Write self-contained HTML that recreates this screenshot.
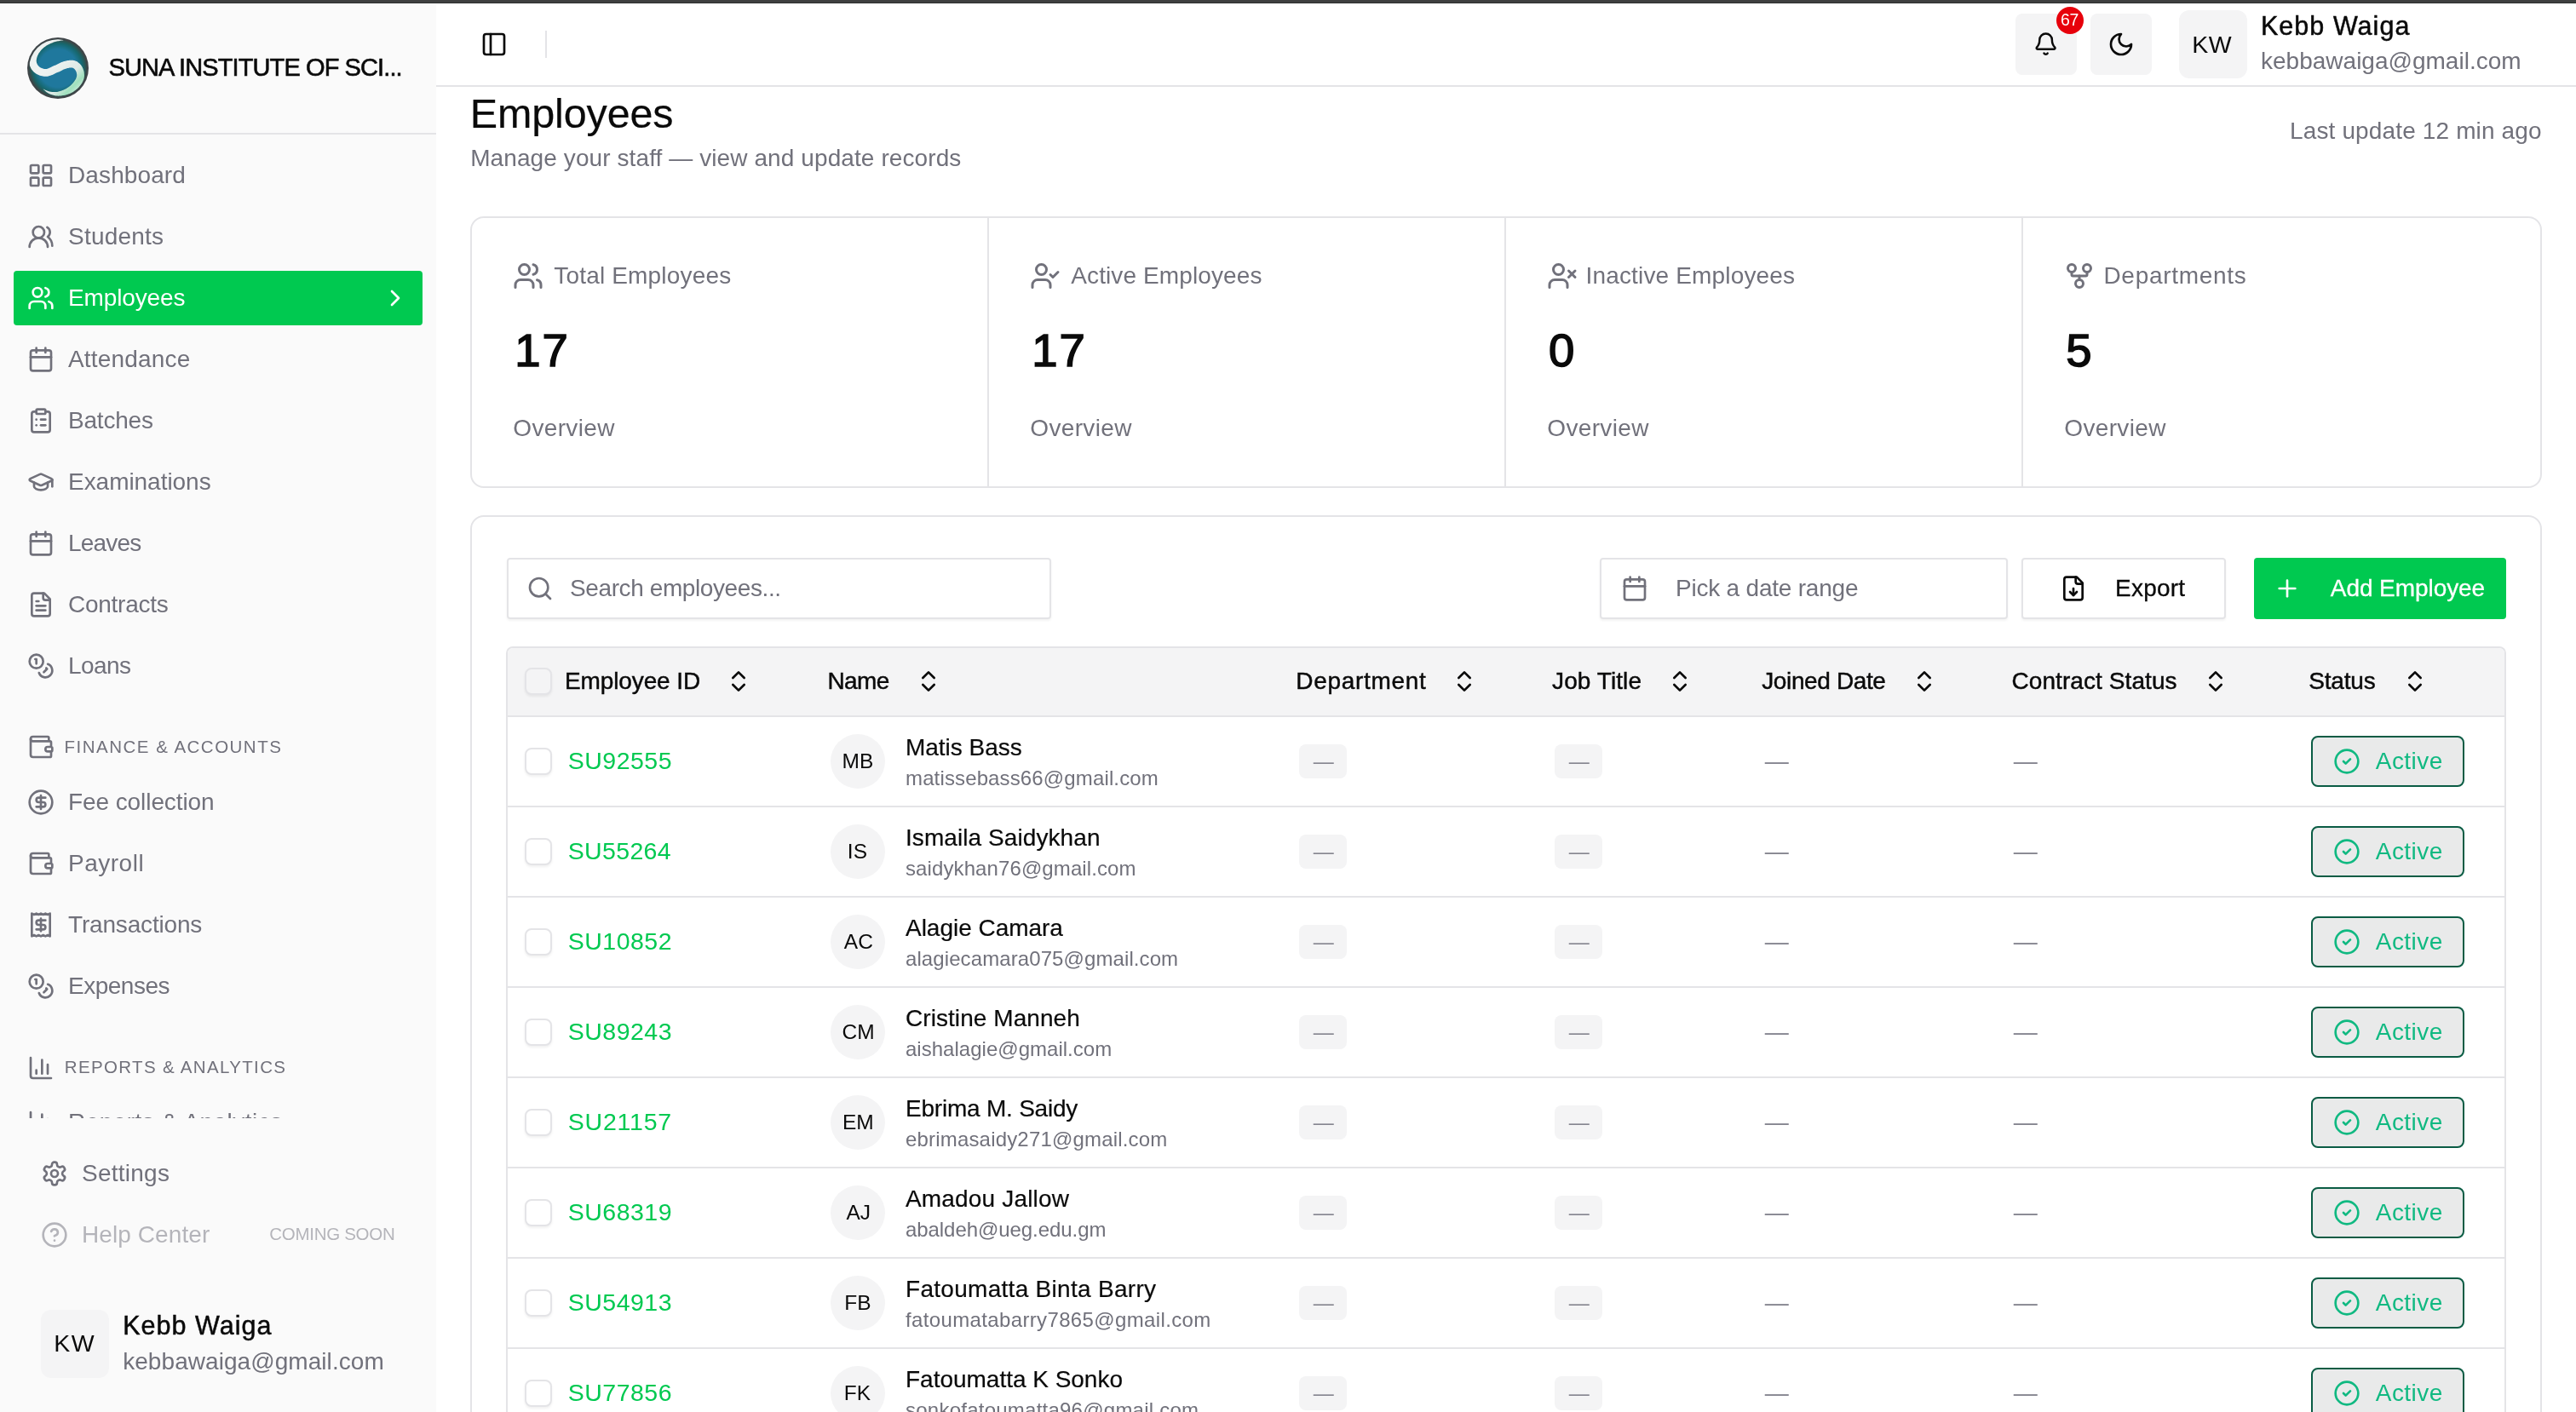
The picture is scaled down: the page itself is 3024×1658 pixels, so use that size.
<!DOCTYPE html>
<html lang="en"><head><meta charset="utf-8"><title>Employees</title>
<style>
*{box-sizing:border-box;margin:0;padding:0}
html,body{width:3024px;height:1658px;overflow:hidden;background:#fff}
body{font-family:"Liberation Sans",sans-serif;color:#0a0a0a;position:relative}
.t{position:absolute;white-space:nowrap}
.ic{position:absolute;fill:none;stroke:currentColor;stroke-linecap:round;stroke-linejoin:round;color:#71717b}
.abs{position:absolute}
#topbar{left:0;top:0;width:3024px;height:4px;background:linear-gradient(#3f4040 0,#3f4040 3px,#2e3030 3px,#2e3030 4px)}
#sidebar{left:0;top:5px;width:512px;height:1653px;background:#fafafa}
.hl{position:absolute;height:2px;background:#e4e4e7}
.vl{position:absolute;width:2px;background:#e4e4e7}
.card{position:absolute;border:2px solid #e4e4e7;border-radius:16px;background:#fff}
.btnbox{position:absolute;border:2px solid #e4e4e7;border-radius:4px;background:#fff;box-shadow:0 2px 3px rgba(0,0,0,.05)}
.sq{position:absolute;background:#f4f4f5;border-radius:12px}
.cb{position:absolute;width:32px;height:32px;border:2px solid #e4e4e7;border-radius:8px;background:#fff;box-shadow:0 2px 3px rgba(0,0,0,.06)}
.av{position:absolute;width:64px;height:64px;border-radius:50%;background:#f4f4f5}
.pill{position:absolute;width:56px;height:40px;border-radius:8px;background:#f4f4f5}
.badge{position:absolute;width:180px;height:60px;border:2px solid #0a5c44;border-radius:8px;background:#e9eaea}
#root{position:absolute;left:0;top:0;width:3024px;height:1658px;will-change:transform;transform-origin:0 0}
</style></head><body><div id="root">
<div id="topbar" class="abs"></div>
<div id="sidebar" class="abs"></div>

<svg class="abs" style="left:32px;top:43.5px;width:72px;height:72px" viewBox="0 0 72 72">
<defs><radialGradient id="lg" cx="50%" cy="50%" r="50%"><stop offset="0" stop-color="#1f789d"/><stop offset="0.62" stop-color="#1f789d"/><stop offset="0.8" stop-color="#16686f"/><stop offset="0.9" stop-color="#2b5552"/><stop offset="0.95" stop-color="#3f4548"/><stop offset="1" stop-color="#3f4548"/></radialGradient>
<linearGradient id="sw" gradientUnits="userSpaceOnUse" x1="30" y1="30" x2="62" y2="62"><stop offset="0" stop-color="#eef2f1"/><stop offset="0.55" stop-color="#dfeae6"/><stop offset="0.8" stop-color="#9fe0bd"/><stop offset="1" stop-color="#cfe9dc"/></linearGradient></defs>
<circle cx="36" cy="36" r="36" fill="url(#lg)"/>
<clipPath id="lc"><circle cx="36" cy="36" r="33.8"/></clipPath><path d="M43.2 2.8 L42.1 2.5 L41.1 2.2 L40.0 2.0 L39.0 1.7 L37.9 1.5 L36.9 1.3 L35.8 1.1 L34.7 0.9 L33.6 0.8 L32.4 0.7 L31.2 0.7 L30.0 0.8 L28.8 0.9 L27.6 1.0 L26.4 1.2 L25.2 1.5 L23.9 1.7 L22.7 2.0 L21.4 2.4 L20.2 2.8 L19.0 3.3 L17.8 3.8 L16.6 4.3 L15.5 4.9 L14.5 5.6 L13.4 6.3 L12.4 7.0 L11.5 7.8 L10.6 8.6 L9.7 9.5 L8.8 10.4 L8.0 11.3 L7.3 12.3 L6.6 13.3 L5.9 14.3 L5.3 15.3 L4.8 16.3 L4.3 17.4 L3.8 18.5 L3.4 19.6 L3.0 20.8 L2.7 21.9 L2.4 23.1 L2.2 24.3 L2.0 25.5 L2.0 26.7 L1.9 28.0 L2.0 29.2 L2.2 30.4 L2.5 31.5 L2.8 32.7 L3.2 33.8 L3.7 34.8 L4.2 35.9 L4.8 36.9 L5.4 37.9 L6.2 38.8 L6.9 39.7 L7.7 40.5 L8.6 41.3 L9.6 42.0 L10.6 42.7 L11.6 43.3 L12.7 43.8 L13.8 44.2 L14.9 44.7 L16.1 45.0 L17.3 45.3 L18.5 45.5 L19.7 45.7 L20.9 45.8 L22.2 45.8 L23.5 45.7 L24.8 45.5 L26.0 45.1 L27.2 44.7 L28.3 44.3 L29.4 43.9 L30.4 43.4 L31.4 42.9 L32.3 42.5 L33.3 42.0 L34.1 41.6 L35.0 41.3 L36.0 40.8 L37.1 40.4 L38.1 39.9 L39.1 39.4 L40.1 38.9 L41.0 38.4 L41.9 38.0 L42.8 37.6 L43.6 37.2 L44.4 36.9 L45.2 36.7 L45.9 36.4 L46.6 36.2 L47.4 36.1 L48.2 35.9 L49.0 35.8 L49.7 35.6 L50.4 35.6 L51.0 35.5 L51.6 35.5 L52.1 35.5 L52.6 35.6 L53.0 35.6 L53.3 35.7 L53.6 35.8 L53.9 36.0 L54.2 36.1 L54.6 36.4 L54.9 36.6 L55.3 36.9 L55.6 37.3 L55.9 37.6 L56.2 38.0 L56.5 38.4 L56.8 38.8 L57.0 39.2 L57.2 39.7 L57.4 40.1 L57.6 40.6 L57.8 41.2 L57.9 41.8 L58.0 42.3 L58.1 42.9 L58.2 43.5 L58.2 44.1 L58.2 44.6 L58.1 45.1 L58.1 45.6 L58.0 46.1 L57.8 46.6 L57.6 47.1 L57.4 47.7 L57.1 48.4 L56.8 49.0 L56.4 49.7 L56.0 50.3 L55.6 51.0 L55.2 51.6 L54.7 52.2 L54.2 52.8 L53.7 53.4 L53.2 54.0 L52.7 54.6 L52.1 55.2 L51.5 55.8 L50.8 56.4 L50.1 57.0 L49.5 57.5 L48.8 58.0 L48.1 58.6 L47.3 59.0 L46.6 59.5 L45.8 59.9 L45.0 60.4 L44.2 60.8 L43.3 61.2 L42.3 61.7 L41.4 62.0 L40.4 62.4 L39.5 62.7 L38.6 63.0 L37.7 63.3 L36.8 63.6 L36.0 63.7 L35.2 63.9 L34.4 64.0 L33.6 64.1 L32.8 64.1 L32.0 64.1 L31.2 64.1 L30.4 64.1 L29.7 64.0 L28.9 63.9 L28.1 63.8 L27.3 63.7 L26.6 63.6 L25.9 63.4 L25.2 63.3 L24.6 63.1 L23.9 62.8 L23.2 62.6 L22.6 62.3 L21.9 62.0 L21.2 61.7 L20.6 61.4 L19.9 61.1 L19.2 60.8 L18.5 60.6 L18.5 60.6 L19.1 61.1 L19.6 61.6 L20.2 62.0 L20.7 62.5 L21.3 63.0 L21.8 63.5 L22.4 63.9 L23.0 64.4 L23.7 64.8 L24.3 65.3 L25.1 65.7 L25.8 66.0 L26.6 66.4 L27.3 66.7 L28.1 67.0 L28.9 67.3 L29.8 67.6 L30.6 67.8 L31.5 68.1 L32.4 68.3 L33.4 68.4 L34.4 68.6 L35.4 68.6 L36.4 68.7 L37.5 68.6 L38.6 68.6 L39.7 68.5 L40.8 68.3 L42.0 68.1 L43.1 67.9 L44.3 67.7 L45.4 67.4 L46.5 67.1 L47.7 66.7 L48.7 66.3 L49.8 65.9 L50.8 65.4 L51.8 64.9 L52.8 64.4 L53.8 63.9 L54.7 63.3 L55.7 62.6 L56.6 62.0 L57.4 61.3 L58.3 60.6 L59.1 59.9 L59.8 59.1 L60.6 58.4 L61.3 57.6 L61.9 56.8 L62.6 55.9 L63.2 55.1 L63.8 54.2 L64.4 53.3 L64.9 52.3 L65.4 51.3 L65.8 50.3 L66.2 49.3 L66.5 48.3 L66.7 47.2 L66.9 46.1 L67.0 45.0 L67.0 44.0 L66.9 42.9 L66.8 41.8 L66.7 40.8 L66.5 39.8 L66.2 38.8 L65.9 37.9 L65.6 36.9 L65.2 36.0 L64.8 35.2 L64.3 34.3 L63.8 33.5 L63.3 32.7 L62.7 32.0 L62.0 31.2 L61.3 30.5 L60.5 29.9 L59.7 29.2 L58.8 28.6 L57.9 28.1 L56.9 27.7 L55.9 27.3 L54.8 27.0 L53.7 26.8 L52.7 26.7 L51.6 26.7 L50.6 26.7 L49.6 26.8 L48.5 26.9 L47.5 27.1 L46.5 27.3 L45.5 27.5 L44.5 27.7 L43.5 28.0 L42.4 28.3 L41.3 28.7 L40.3 29.1 L39.2 29.6 L38.2 30.0 L37.2 30.5 L36.2 31.0 L35.2 31.5 L34.3 31.9 L33.4 32.4 L32.5 32.8 L31.6 33.1 L30.6 33.6 L29.5 34.0 L28.6 34.5 L27.6 35.0 L26.7 35.4 L25.8 35.8 L25.0 36.2 L24.2 36.5 L23.5 36.7 L22.9 36.9 L22.3 37.0 L21.8 37.0 L21.2 37.0 L20.6 37.0 L19.9 36.9 L19.2 36.7 L18.4 36.5 L17.7 36.3 L17.0 36.1 L16.3 35.8 L15.7 35.5 L15.1 35.1 L14.6 34.8 L14.2 34.5 L13.8 34.1 L13.4 33.7 L13.0 33.3 L12.6 32.8 L12.3 32.2 L11.9 31.7 L11.6 31.1 L11.4 30.5 L11.1 29.9 L11.0 29.3 L10.9 28.8 L10.8 28.2 L10.7 27.7 L10.7 27.1 L10.8 26.4 L10.9 25.7 L11.0 24.9 L11.2 24.2 L11.4 23.4 L11.7 22.5 L12.0 21.8 L12.3 21.0 L12.7 20.2 L13.1 19.5 L13.4 18.8 L13.9 18.1 L14.4 17.4 L14.9 16.7 L15.4 16.0 L16.0 15.3 L16.6 14.6 L17.2 13.9 L17.8 13.3 L18.5 12.7 L19.2 12.0 L19.9 11.5 L20.6 10.9 L21.4 10.4 L22.2 9.8 L23.1 9.3 L24.0 8.8 L25.0 8.3 L26.0 7.8 L27.0 7.3 L28.0 6.8 L29.0 6.4 L30.0 6.0 L31.0 5.6 L31.9 5.3 L32.9 5.0 L33.8 4.8 L34.8 4.5 L35.8 4.3 L36.8 4.2 L37.9 4.0 L38.9 3.8 L40.0 3.6 L41.1 3.4 L42.1 3.2 L43.2 2.8Z" fill="url(#sw)" clip-path="url(#lc)"/>
</svg>
<span id="t1" class="t" style="left:127.57px;top:60.25px;font-size:29px;line-height:38px;color:#0a0a0a;letter-spacing:-0.900px;-webkit-text-stroke:0.6px #0a0a0a;">SUNA INSTITUTE OF SCI...</span>
<div class="hl" style="left:0;top:156px;width:512px"></div>
<svg class="ic" style="left:32px;top:190px;width:32px;height:32px;" viewBox="0 0 24 24" stroke-width="2"><rect width="7" height="7" x="3" y="3" rx="1"/><rect width="7" height="7" x="14" y="3" rx="1"/><rect width="7" height="7" x="14" y="14" rx="1"/><rect width="7" height="7" x="3" y="14" rx="1"/></svg>
<span id="t2" class="t" style="left:80.00px;top:187.75px;font-size:28px;line-height:36px;color:#71717b;letter-spacing:0.113px;">Dashboard</span>
<svg class="ic" style="left:32px;top:262px;width:32px;height:32px;" viewBox="0 0 24 24" stroke-width="2"><path d="M18 21a8 8 0 0 0-16 0"/><circle cx="10" cy="8" r="5"/><path d="M22 20c0-3.37-2-6.5-4-8a5 5 0 0 0-.45-8.3"/></svg>
<span id="t3" class="t" style="left:80.00px;top:259.75px;font-size:28px;line-height:36px;color:#71717b;letter-spacing:0.219px;">Students</span>
<div class="abs" style="left:16px;top:318px;width:480px;height:64px;border-radius:4px;background:#00c950"></div>
<svg class="ic" style="left:32px;top:334px;width:32px;height:32px;color:#fff;" viewBox="0 0 24 24" stroke-width="2"><path d="M16 21v-2a4 4 0 0 0-4-4H6a4 4 0 0 0-4 4v2"/><circle cx="9" cy="7" r="4"/><path d="M22 21v-2a4 4 0 0 0-3-3.87"/><path d="M16 3.13a4 4 0 0 1 0 7.75"/></svg>
<span id="t4" class="t" style="left:80.00px;top:331.75px;font-size:28px;line-height:36px;color:#fff;letter-spacing:-0.124px;">Employees</span>
<svg class="ic" style="left:448px;top:334px;width:32px;height:32px;color:#fff;" viewBox="0 0 24 24" stroke-width="2"><path d="m9 18 6-6-6-6"/></svg>
<svg class="ic" style="left:32px;top:406px;width:32px;height:32px;" viewBox="0 0 24 24" stroke-width="2"><path d="M8 2v4"/><path d="M16 2v4"/><rect width="18" height="18" x="3" y="4" rx="2"/><path d="M3 10h18"/></svg>
<span id="t5" class="t" style="left:80.00px;top:403.75px;font-size:28px;line-height:36px;color:#71717b;letter-spacing:0.170px;">Attendance</span>
<svg class="ic" style="left:32px;top:478px;width:32px;height:32px;" viewBox="0 0 24 24" stroke-width="2"><rect width="8" height="4" x="8" y="2" rx="1" ry="1"/><path d="M16 4h2a2 2 0 0 1 2 2v14a2 2 0 0 1-2 2H6a2 2 0 0 1-2-2V6a2 2 0 0 1 2-2h2"/><path d="M12 11h4"/><path d="M12 16h4"/><path d="M8 11h.01"/><path d="M8 16h.01"/></svg>
<span id="t6" class="t" style="left:80.00px;top:475.75px;font-size:28px;line-height:36px;color:#71717b;letter-spacing:-0.195px;">Batches</span>
<svg class="ic" style="left:32px;top:550px;width:32px;height:32px;" viewBox="0 0 24 24" stroke-width="2"><path d="M21.42 10.922a1 1 0 0 0-.019-1.838L12.83 5.18a2 2 0 0 0-1.66 0L2.6 9.08a1 1 0 0 0 0 1.832l8.57 3.908a2 2 0 0 0 1.66 0z"/><path d="M22 10v6"/><path d="M6 12.5V16a6 3 0 0 0 12 0v-3.5"/></svg>
<span id="t7" class="t" style="left:80.00px;top:547.75px;font-size:28px;line-height:36px;color:#71717b;letter-spacing:-0.041px;">Examinations</span>
<svg class="ic" style="left:32px;top:622px;width:32px;height:32px;" viewBox="0 0 24 24" stroke-width="2"><path d="M8 2v4"/><path d="M16 2v4"/><rect width="18" height="18" x="3" y="4" rx="2"/><path d="M3 10h18"/></svg>
<span id="t8" class="t" style="left:80.00px;top:619.75px;font-size:28px;line-height:36px;color:#71717b;letter-spacing:-0.792px;">Leaves</span>
<svg class="ic" style="left:32px;top:694px;width:32px;height:32px;" viewBox="0 0 24 24" stroke-width="2"><path d="M15 2H6a2 2 0 0 0-2 2v16a2 2 0 0 0 2 2h12a2 2 0 0 0 2-2V7Z"/><path d="M14 2v4a2 2 0 0 0 2 2h4"/><path d="M10 9H8"/><path d="M16 13H8"/><path d="M16 17H8"/></svg>
<span id="t9" class="t" style="left:80.00px;top:691.75px;font-size:28px;line-height:36px;color:#71717b;letter-spacing:-0.259px;">Contracts</span>
<svg class="ic" style="left:32px;top:766px;width:32px;height:32px;" viewBox="0 0 24 24" stroke-width="2"><circle cx="8" cy="8" r="6"/><path d="M18.09 10.37A6 6 0 1 1 10.34 18"/><path d="M7 6h1v4"/><path d="m16.71 13.88.7.71-2.82 2.82"/></svg>
<span id="t10" class="t" style="left:80.00px;top:763.75px;font-size:28px;line-height:36px;color:#71717b;letter-spacing:-0.585px;">Loans</span>
<svg class="ic" style="left:32px;top:861px;width:32px;height:32px;" viewBox="0 0 24 24" stroke-width="2"><path d="M19 7V4a1 1 0 0 0-1-1H5a2 2 0 0 0 0 4h15a1 1 0 0 1 1 1v4h-3a2 2 0 0 0 0 4h3a1 1 0 0 0 1-1v-2a1 1 0 0 0-1-1"/><path d="M3 5v14a2 2 0 0 0 2 2h15a1 1 0 0 0 1-1v-4"/></svg>
<span id="t11" class="t" style="left:75.62px;top:863.25px;font-size:20.5px;line-height:27px;color:#71717b;letter-spacing:1.488px;">FINANCE &amp; ACCOUNTS</span>
<svg class="ic" style="left:32px;top:926.0px;width:32px;height:32px;" viewBox="0 0 24 24" stroke-width="2"><circle cx="12" cy="12" r="10"/><path d="M16 8h-6a2 2 0 1 0 0 4h4a2 2 0 1 1 0 4H8"/><path d="M12 18V6"/></svg>
<span id="t12" class="t" style="left:80.00px;top:923.75px;font-size:28px;line-height:36px;color:#71717b;letter-spacing:-0.083px;">Fee collection</span>
<svg class="ic" style="left:32px;top:998.0px;width:32px;height:32px;" viewBox="0 0 24 24" stroke-width="2"><path d="M19 7V4a1 1 0 0 0-1-1H5a2 2 0 0 0 0 4h15a1 1 0 0 1 1 1v4h-3a2 2 0 0 0 0 4h3a1 1 0 0 0 1-1v-2a1 1 0 0 0-1-1"/><path d="M3 5v14a2 2 0 0 0 2 2h15a1 1 0 0 0 1-1v-4"/></svg>
<span id="t13" class="t" style="left:80.00px;top:995.75px;font-size:28px;line-height:36px;color:#71717b;letter-spacing:0.510px;">Payroll</span>
<svg class="ic" style="left:32px;top:1070.0px;width:32px;height:32px;" viewBox="0 0 24 24" stroke-width="2"><path d="M4 2v20l2-1 2 1 2-1 2 1 2-1 2 1 2-1 2 1V2l-2 1-2-1-2 1-2-1-2 1-2-1-2 1Z"/><path d="M16 8h-6a2 2 0 1 0 0 4h4a2 2 0 1 1 0 4H8"/><path d="M12 17.5v-11"/></svg>
<span id="t14" class="t" style="left:80.00px;top:1067.75px;font-size:28px;line-height:36px;color:#71717b;letter-spacing:-0.172px;">Transactions</span>
<svg class="ic" style="left:32px;top:1142.0px;width:32px;height:32px;" viewBox="0 0 24 24" stroke-width="2"><circle cx="8" cy="8" r="6"/><path d="M18.09 10.37A6 6 0 1 1 10.34 18"/><path d="M7 6h1v4"/><path d="m16.71 13.88.7.71-2.82 2.82"/></svg>
<span id="t15" class="t" style="left:80.00px;top:1139.75px;font-size:28px;line-height:36px;color:#71717b;letter-spacing:-0.489px;">Expenses</span>
<svg class="ic" style="left:32px;top:1237.5px;width:32px;height:32px;" viewBox="0 0 24 24" stroke-width="2"><path d="M3 3v16a2 2 0 0 0 2 2h16"/><path d="M18 17V9"/><path d="M13 17V5"/><path d="M8 17v-3"/></svg>
<span id="t16" class="t" style="left:75.80px;top:1239.25px;font-size:20.5px;line-height:27px;color:#71717b;letter-spacing:1.340px;">REPORTS &amp; ANALYTICS</span>
<div class="abs" style="left:0;top:1290px;width:512px;height:23px;overflow:hidden">
<svg class="ic" style="left:32px;top:11.5px;width:32px;height:32px;" viewBox="0 0 24 24" stroke-width="2"><path d="M3 3v16a2 2 0 0 0 2 2h16"/><path d="M18 17V9"/><path d="M13 17V5"/><path d="M8 17v-3"/></svg>
<span id="t17" class="t" style="left:80.00px;top:9.75px;font-size:28px;line-height:36px;color:#71717b;letter-spacing:0.465px;">Reports &amp; Analytics</span>
</div>
<svg class="ic" style="left:48px;top:1362px;width:32px;height:32px;" viewBox="0 0 24 24" stroke-width="2"><path d="M12.22 2h-.44a2 2 0 0 0-2 2v.18a2 2 0 0 1-1 1.73l-.43.25a2 2 0 0 1-2 0l-.15-.08a2 2 0 0 0-2.73.73l-.22.38a2 2 0 0 0 .73 2.73l.15.1a2 2 0 0 1 1 1.72v.51a2 2 0 0 1-1 1.74l-.15.09a2 2 0 0 0-.73 2.73l.22.38a2 2 0 0 0 2.73.73l.15-.08a2 2 0 0 1 2 0l.43.25a2 2 0 0 1 1 1.73V20a2 2 0 0 0 2 2h.44a2 2 0 0 0 2-2v-.18a2 2 0 0 1 1-1.73l.43-.25a2 2 0 0 1 2 0l.15.08a2 2 0 0 0 2.73-.73l.22-.39a2 2 0 0 0-.73-2.73l-.15-.08a2 2 0 0 1-1-1.74v-.5a2 2 0 0 1 1-1.74l.15-.09a2 2 0 0 0 .73-2.73l-.22-.38a2 2 0 0 0-2.73-.73l-.15.08a2 2 0 0 1-2 0l-.43-.25a2 2 0 0 1-1-1.73V4a2 2 0 0 0-2-2z"/><circle cx="12" cy="12" r="3"/></svg>
<span id="t18" class="t" style="left:96.00px;top:1359.75px;font-size:28px;line-height:36px;color:#71717b;letter-spacing:0.244px;">Settings</span>
<div class="abs" style="left:0;top:1410px;width:512px;height:80px;opacity:.5">
<svg class="ic" style="left:48px;top:24px;width:32px;height:32px;" viewBox="0 0 24 24" stroke-width="2"><circle cx="12" cy="12" r="10"/><path d="M9.09 9a3 3 0 0 1 5.83 1c0 2-3 3-3 3"/><path d="M12 17h.01"/></svg>
<span id="t19" class="t" style="left:96.00px;top:21.75px;font-size:28px;line-height:36px;color:#71717b;letter-spacing:0.081px;">Help Center</span>
<span id="t20" class="t" style="left:316.36px;top:25.25px;font-size:20.5px;line-height:27px;color:#71717b;letter-spacing:-0.297px;">COMING SOON</span>
</div>
<div class="sq" style="left:48px;top:1538px;width:80px;height:80px"></div>
<span id="t21" class="t" style="left:63.30px;top:1558.75px;font-size:28.5px;line-height:37px;color:#0a0a0a;letter-spacing:1.530px;">KW</span>
<span id="t22" class="t" style="left:144.20px;top:1536.25px;font-size:30.5px;line-height:40px;color:#0a0a0a;letter-spacing:1.040px;-webkit-text-stroke:0.5px #0a0a0a;">Kebb Waiga</span>
<span id="t23" class="t" style="left:144.20px;top:1580.75px;font-size:28px;line-height:36px;color:#71717b;letter-spacing:0.057px;">kebbawaiga@gmail.com</span>
<div class="hl" style="left:512px;top:100px;width:2512px"></div>
<svg class="ic" style="left:564px;top:36px;width:32px;height:32px;color:#0a0a0a;" viewBox="0 0 24 24" stroke-width="2"><rect width="18" height="18" x="3" y="3" rx="2"/><path d="M9 3v18"/></svg>
<div class="vl" style="left:640px;top:36px;height:32px"></div>
<div class="sq" style="left:2366px;top:16px;width:72px;height:72px;border-radius:8px"></div>
<svg class="ic" style="left:2387.4px;top:37.3px;width:29.2px;height:29.2px;color:#0a0a0a;" viewBox="0 0 24 24" stroke-width="2"><path d="M10.268 21a2 2 0 0 0 3.464 0"/><path d="M3.262 15.326A1 1 0 0 0 4 17h16a1 1 0 0 0 .74-1.673C19.41 13.956 18 12.499 18 8A6 6 0 0 0 6 8c0 4.499-1.411 5.956-2.738 7.326"/></svg>
<div class="abs" style="left:2414px;top:8px;width:32px;height:32px;border-radius:50%;background:#e7000b"></div>
<span id="t24" class="t" style="left:2419.10px;top:10.75px;font-size:19.5px;line-height:25px;color:#fff;letter-spacing:-0.360px;">67</span>
<div class="sq" style="left:2454px;top:16px;width:72px;height:72px;border-radius:8px"></div>
<svg class="ic" style="left:2474px;top:36px;width:32px;height:32px;color:#0a0a0a;" viewBox="0 0 24 24" stroke-width="2"><path d="M12 3a6 6 0 0 0 9 9 9 9 0 1 1-9-9Z"/></svg>
<div class="sq" style="left:2558px;top:12px;width:80px;height:80px"></div>
<span id="t25" class="t" style="left:2573.30px;top:33.75px;font-size:28.5px;line-height:37px;color:#0a0a0a;letter-spacing:0.360px;">KW</span>
<span id="t26" class="t" style="left:2653.99px;top:10.25px;font-size:30.5px;line-height:40px;color:#0a0a0a;letter-spacing:1.040px;-webkit-text-stroke:0.5px #0a0a0a;">Kebb Waiga</span>
<span id="t27" class="t" style="left:2653.99px;top:53.75px;font-size:28px;line-height:36px;color:#71717b;letter-spacing:0.009px;">kebbawaiga@gmail.com</span>
<span id="t28" class="t" style="left:551.84px;top:101.75px;font-size:48.5px;line-height:63px;color:#0a0a0a;letter-spacing:-0.146px;-webkit-text-stroke:0.2px #0a0a0a;">Employees</span>
<span id="t29" class="t" style="left:552.20px;top:167.75px;font-size:28px;line-height:36px;color:#71717b;letter-spacing:0.092px;">Manage your staff — view and update records</span>
<span id="t30" class="t" style="left:2687.99px;top:135.75px;font-size:28px;line-height:36px;color:#71717b;letter-spacing:0.141px;">Last update 12 min ago</span>
<div class="card" style="left:552px;top:254px;width:2432px;height:319px"></div>
<div class="vl" style="left:1159px;top:256px;height:315px"></div>
<div class="vl" style="left:1766px;top:256px;height:315px"></div>
<div class="vl" style="left:2373px;top:256px;height:315px"></div>
<svg class="ic" style="left:602px;top:306px;width:36px;height:36px;" viewBox="0 0 24 24" stroke-width="2"><path d="M16 21v-2a4 4 0 0 0-4-4H6a4 4 0 0 0-4 4v2"/><circle cx="9" cy="7" r="4"/><path d="M22 21v-2a4 4 0 0 0-3-3.87"/><path d="M16 3.13a4 4 0 0 1 0 7.75"/></svg>
<span id="t31" class="t" style="left:650.24px;top:305.75px;font-size:28px;line-height:36px;color:#71717b;letter-spacing:0.180px;">Total Employees</span>
<span id="t32" class="t" style="left:604.36px;top:376.25px;font-size:54.5px;line-height:71px;color:#0a0a0a;letter-spacing:1.800px;-webkit-text-stroke:1.6px #0a0a0a;">17</span>
<span id="t33" class="t" style="left:602.35px;top:484.75px;font-size:28px;line-height:36px;color:#71717b;letter-spacing:0.334px;">Overview</span>
<svg class="ic" style="left:1209px;top:306px;width:36px;height:36px;" viewBox="0 0 24 24" stroke-width="2"><path d="M16 21v-2a4 4 0 0 0-4-4H6a4 4 0 0 0-4 4v2"/><circle cx="9" cy="7" r="4"/><polyline points="16 11 18 13 22 9"/></svg>
<span id="t34" class="t" style="left:1257.24px;top:305.75px;font-size:28px;line-height:36px;color:#71717b;letter-spacing:0.108px;">Active Employees</span>
<span id="t35" class="t" style="left:1211.36px;top:376.25px;font-size:54.5px;line-height:71px;color:#0a0a0a;letter-spacing:1.800px;-webkit-text-stroke:1.6px #0a0a0a;">17</span>
<span id="t36" class="t" style="left:1209.35px;top:484.75px;font-size:28px;line-height:36px;color:#71717b;letter-spacing:0.334px;">Overview</span>
<svg class="ic" style="left:1816px;top:306px;width:36px;height:36px;" viewBox="0 0 24 24" stroke-width="2"><path d="M16 21v-2a4 4 0 0 0-4-4H6a4 4 0 0 0-4 4v2"/><circle cx="9" cy="7" r="4"/><line x1="17" x2="22" y1="8" y2="13"/><line x1="22" x2="17" y1="8" y2="13"/></svg>
<span id="t37" class="t" style="left:1861.54px;top:305.75px;font-size:28px;line-height:36px;color:#71717b;letter-spacing:0.159px;">Inactive Employees</span>
<span id="t38" class="t" style="left:1818.12px;top:376.25px;font-size:54.5px;line-height:71px;color:#0a0a0a;-webkit-text-stroke:1.6px #0a0a0a;">0</span>
<span id="t39" class="t" style="left:1816.35px;top:484.75px;font-size:28px;line-height:36px;color:#71717b;letter-spacing:0.334px;">Overview</span>
<svg class="ic" style="left:2423px;top:306px;width:36px;height:36px;" viewBox="0 0 24 24" stroke-width="2"><circle cx="12" cy="18" r="3"/><circle cx="6" cy="6" r="3"/><circle cx="18" cy="6" r="3"/><path d="M18 9v2c0 .6-.4 1-1 1H7c-.6 0-1-.4-1-1V9"/><path d="M12 12v3"/></svg>
<span id="t40" class="t" style="left:2469.44px;top:305.75px;font-size:28px;line-height:36px;color:#71717b;letter-spacing:0.711px;">Departments</span>
<span id="t41" class="t" style="left:2425.17px;top:376.25px;font-size:54.5px;line-height:71px;color:#0a0a0a;-webkit-text-stroke:1.6px #0a0a0a;">5</span>
<span id="t42" class="t" style="left:2423.35px;top:484.75px;font-size:28px;line-height:36px;color:#71717b;letter-spacing:0.334px;">Overview</span>
<div class="card" style="left:552px;top:605px;width:2432px;height:1200px"></div>
<div class="btnbox" style="left:594.5px;top:655px;width:639px;height:72px"></div>
<svg class="ic" style="left:618px;top:675px;width:32px;height:32px;" viewBox="0 0 24 24" stroke-width="2"><circle cx="11" cy="11" r="8"/><path d="m21 21-4.3-4.3"/></svg>
<span id="t43" class="t" style="left:669.10px;top:672.75px;font-size:28px;line-height:36px;color:#71717b;letter-spacing:-0.405px;">Search employees...</span>
<div class="btnbox" style="left:1877.5px;top:655px;width:479.5px;height:72px"></div>
<svg class="ic" style="left:1903px;top:675px;width:32px;height:32px;" viewBox="0 0 24 24" stroke-width="2"><path d="M8 2v4"/><path d="M16 2v4"/><rect width="18" height="18" x="3" y="4" rx="2"/><path d="M3 10h18"/></svg>
<span id="t44" class="t" style="left:1967.03px;top:672.75px;font-size:28px;line-height:36px;color:#71717b;letter-spacing:-0.214px;">Pick a date range</span>
<div class="btnbox" style="left:2373px;top:655px;width:239.5px;height:72px"></div>
<svg class="ic" style="left:2418px;top:675px;width:32px;height:32px;color:#0a0a0a;" viewBox="0 0 24 24" stroke-width="2"><path d="M15 2H6a2 2 0 0 0-2 2v16a2 2 0 0 0 2 2h12a2 2 0 0 0 2-2V7Z"/><path d="M14 2v4a2 2 0 0 0 2 2h4"/><path d="M12 18v-6"/><path d="m9 15 3 3 3-3"/></svg>
<span id="t45" class="t" style="left:2483.08px;top:672.75px;font-size:28px;line-height:36px;color:#0a0a0a;letter-spacing:0.216px;-webkit-text-stroke:0.3px #0a0a0a;">Export</span>
<div class="abs" style="left:2645.5px;top:655px;width:296.5px;height:72px;border-radius:4px;background:#00c950"></div>
<svg class="ic" style="left:2669px;top:675px;width:32px;height:32px;color:#fff;" viewBox="0 0 24 24" stroke-width="2"><path d="M5 12h14"/><path d="M12 5v14"/></svg>
<span id="t46" class="t" style="left:2735.78px;top:672.75px;font-size:28px;line-height:36px;color:#fff;letter-spacing:-0.065px;-webkit-text-stroke:0.3px #fff;">Add Employee</span>
<div class="abs" style="left:594px;top:759px;width:2348px;height:1000px;border:2px solid #e4e4e7;border-radius:8px 8px 0 0;background:#fff"></div>
<div class="abs" style="left:596px;top:761px;width:2344px;height:79px;border-radius:6px 6px 0 0;background:#f4f4f5"></div>
<div class="cb" style="left:616px;top:784px;background:#f4f4f5"></div>
<span id="t47" class="t" style="left:662.99px;top:781.75px;font-size:28px;line-height:36px;color:#0a0a0a;letter-spacing:-0.117px;-webkit-text-stroke:0.45px #0a0a0a;">Employee ID</span>
<svg class="ic" style="left:851.1px;top:784.3px;width:32px;height:32px;color:#0a0a0a;" viewBox="0 0 24 24" stroke-width="2"><path d="m7 15 5 5 5-5"/><path d="m7 9 5-5 5 5"/></svg>
<span id="t48" class="t" style="left:971.41px;top:781.75px;font-size:28px;line-height:36px;color:#0a0a0a;letter-spacing:-0.600px;-webkit-text-stroke:0.45px #0a0a0a;">Name</span>
<svg class="ic" style="left:1073.9px;top:784.3px;width:32px;height:32px;color:#0a0a0a;" viewBox="0 0 24 24" stroke-width="2"><path d="m7 15 5 5 5-5"/><path d="m7 9 5-5 5 5"/></svg>
<span id="t49" class="t" style="left:1521.25px;top:781.75px;font-size:28px;line-height:36px;color:#0a0a0a;letter-spacing:0.690px;-webkit-text-stroke:0.45px #0a0a0a;">Department</span>
<svg class="ic" style="left:1702.7px;top:784.3px;width:32px;height:32px;color:#0a0a0a;" viewBox="0 0 24 24" stroke-width="2"><path d="m7 15 5 5 5-5"/><path d="m7 9 5-5 5 5"/></svg>
<span id="t50" class="t" style="left:1822.05px;top:781.75px;font-size:28px;line-height:36px;color:#0a0a0a;letter-spacing:0.079px;-webkit-text-stroke:0.45px #0a0a0a;">Job Title</span>
<svg class="ic" style="left:1955.7px;top:784.3px;width:32px;height:32px;color:#0a0a0a;" viewBox="0 0 24 24" stroke-width="2"><path d="m7 15 5 5 5-5"/><path d="m7 9 5-5 5 5"/></svg>
<span id="t51" class="t" style="left:2068.25px;top:781.75px;font-size:28px;line-height:36px;color:#0a0a0a;letter-spacing:-0.378px;-webkit-text-stroke:0.45px #0a0a0a;">Joined Date</span>
<svg class="ic" style="left:2242.9px;top:784.3px;width:32px;height:32px;color:#0a0a0a;" viewBox="0 0 24 24" stroke-width="2"><path d="m7 15 5 5 5-5"/><path d="m7 9 5-5 5 5"/></svg>
<span id="t52" class="t" style="left:2361.51px;top:781.75px;font-size:28px;line-height:36px;color:#0a0a0a;letter-spacing:0.077px;-webkit-text-stroke:0.45px #0a0a0a;">Contract Status</span>
<svg class="ic" style="left:2584.7px;top:784.3px;width:32px;height:32px;color:#0a0a0a;" viewBox="0 0 24 24" stroke-width="2"><path d="m7 15 5 5 5-5"/><path d="m7 9 5-5 5 5"/></svg>
<span id="t53" class="t" style="left:2710.30px;top:781.75px;font-size:28px;line-height:36px;color:#0a0a0a;letter-spacing:-0.198px;-webkit-text-stroke:0.45px #0a0a0a;">Status</span>
<svg class="ic" style="left:2818.7px;top:784.3px;width:32px;height:32px;color:#0a0a0a;" viewBox="0 0 24 24" stroke-width="2"><path d="m7 15 5 5 5-5"/><path d="m7 9 5-5 5 5"/></svg>
<div class="hl" style="left:596px;top:840px;width:2344px"></div>
<div class="cb" style="left:616px;top:878px"></div>
<span id="t54" class="t" style="left:666.78px;top:874.75px;font-size:28.5px;line-height:37px;color:#00c950;letter-spacing:0.480px;">SU92555</span>
<div class="av" style="left:975px;top:862px"></div>
<span id="t55" class="t" style="left:988.55px;top:877.75px;font-size:24.5px;line-height:32px;color:#0a0a0a;">MB</span>
<span id="t56" class="t" style="left:1063.00px;top:859.75px;font-size:28px;line-height:36px;color:#0a0a0a;letter-spacing:-0.030px;-webkit-text-stroke:0.2px #0a0a0a;">Matis Bass</span>
<span id="t57" class="t" style="left:1063.00px;top:898.25px;font-size:24px;line-height:31px;color:#71717b;letter-spacing:0.135px;">matissebass66@gmail.com</span>
<div class="pill" style="left:1525px;top:874px"></div>
<span id="t58" class="t" style="left:1541.74px;top:878.25px;font-size:24px;line-height:31px;color:#85858f;">—</span>
<div class="pill" style="left:1825px;top:874px"></div>
<span id="t59" class="t" style="left:1841.74px;top:878.25px;font-size:24px;line-height:31px;color:#85858f;">—</span>
<span id="t60" class="t" style="left:2071.74px;top:875.75px;font-size:28px;line-height:36px;color:#85858f;">—</span>
<span id="t61" class="t" style="left:2363.63px;top:875.75px;font-size:28px;line-height:36px;color:#85858f;">—</span>
<div class="badge" style="left:2713px;top:864px"></div>
<svg class="ic" style="left:2739px;top:878px;width:32px;height:32px;color:#10b981;" viewBox="0 0 24 24" stroke-width="2"><circle cx="12" cy="12" r="10"/><path d="m9 12 2 2 4-4"/></svg>
<span id="t62" class="t" style="left:2788.80px;top:875.75px;font-size:28px;line-height:36px;color:#10b981;letter-spacing:0.450px;">Active</span>
<div class="hl" style="left:596px;top:946px;width:2344px"></div>
<div class="cb" style="left:616px;top:984px"></div>
<span id="t63" class="t" style="left:666.78px;top:980.75px;font-size:28.5px;line-height:37px;color:#00c950;letter-spacing:0.330px;">SU55264</span>
<div class="av" style="left:975px;top:968px"></div>
<span id="t64" class="t" style="left:994.85px;top:983.75px;font-size:24.5px;line-height:32px;color:#0a0a0a;">IS</span>
<span id="t65" class="t" style="left:1063.00px;top:965.75px;font-size:28px;line-height:36px;color:#0a0a0a;letter-spacing:0.079px;-webkit-text-stroke:0.2px #0a0a0a;">Ismaila Saidykhan</span>
<span id="t66" class="t" style="left:1063.00px;top:1004.25px;font-size:24px;line-height:31px;color:#71717b;letter-spacing:0.103px;">saidykhan76@gmail.com</span>
<div class="pill" style="left:1525px;top:980px"></div>
<span id="t67" class="t" style="left:1541.74px;top:984.25px;font-size:24px;line-height:31px;color:#85858f;">—</span>
<div class="pill" style="left:1825px;top:980px"></div>
<span id="t68" class="t" style="left:1841.74px;top:984.25px;font-size:24px;line-height:31px;color:#85858f;">—</span>
<span id="t69" class="t" style="left:2071.74px;top:981.75px;font-size:28px;line-height:36px;color:#85858f;">—</span>
<span id="t70" class="t" style="left:2363.63px;top:981.75px;font-size:28px;line-height:36px;color:#85858f;">—</span>
<div class="badge" style="left:2713px;top:970px"></div>
<svg class="ic" style="left:2739px;top:984px;width:32px;height:32px;color:#10b981;" viewBox="0 0 24 24" stroke-width="2"><circle cx="12" cy="12" r="10"/><path d="m9 12 2 2 4-4"/></svg>
<span id="t71" class="t" style="left:2788.80px;top:981.75px;font-size:28px;line-height:36px;color:#10b981;letter-spacing:0.450px;">Active</span>
<div class="hl" style="left:596px;top:1052px;width:2344px"></div>
<div class="cb" style="left:616px;top:1090px"></div>
<span id="t72" class="t" style="left:666.78px;top:1086.75px;font-size:28.5px;line-height:37px;color:#00c950;letter-spacing:0.480px;">SU10852</span>
<div class="av" style="left:975px;top:1074px"></div>
<span id="t73" class="t" style="left:990.80px;top:1089.75px;font-size:24.5px;line-height:32px;color:#0a0a0a;">AC</span>
<span id="t74" class="t" style="left:1063.00px;top:1071.75px;font-size:28px;line-height:36px;color:#0a0a0a;letter-spacing:-0.023px;-webkit-text-stroke:0.2px #0a0a0a;">Alagie Camara</span>
<span id="t75" class="t" style="left:1063.00px;top:1110.25px;font-size:24px;line-height:31px;color:#71717b;letter-spacing:0.094px;">alagiecamara075@gmail.com</span>
<div class="pill" style="left:1525px;top:1086px"></div>
<span id="t76" class="t" style="left:1541.74px;top:1090.25px;font-size:24px;line-height:31px;color:#85858f;">—</span>
<div class="pill" style="left:1825px;top:1086px"></div>
<span id="t77" class="t" style="left:1841.74px;top:1090.25px;font-size:24px;line-height:31px;color:#85858f;">—</span>
<span id="t78" class="t" style="left:2071.74px;top:1087.75px;font-size:28px;line-height:36px;color:#85858f;">—</span>
<span id="t79" class="t" style="left:2363.63px;top:1087.75px;font-size:28px;line-height:36px;color:#85858f;">—</span>
<div class="badge" style="left:2713px;top:1076px"></div>
<svg class="ic" style="left:2739px;top:1090px;width:32px;height:32px;color:#10b981;" viewBox="0 0 24 24" stroke-width="2"><circle cx="12" cy="12" r="10"/><path d="m9 12 2 2 4-4"/></svg>
<span id="t80" class="t" style="left:2788.80px;top:1087.75px;font-size:28px;line-height:36px;color:#10b981;letter-spacing:0.450px;">Active</span>
<div class="hl" style="left:596px;top:1158px;width:2344px"></div>
<div class="cb" style="left:616px;top:1196px"></div>
<span id="t81" class="t" style="left:666.78px;top:1192.75px;font-size:28.5px;line-height:37px;color:#00c950;letter-spacing:0.480px;">SU89243</span>
<div class="av" style="left:975px;top:1180px"></div>
<span id="t82" class="t" style="left:988.55px;top:1195.75px;font-size:24.5px;line-height:32px;color:#0a0a0a;">CM</span>
<span id="t83" class="t" style="left:1063.00px;top:1177.75px;font-size:28px;line-height:36px;color:#0a0a0a;letter-spacing:0.064px;-webkit-text-stroke:0.2px #0a0a0a;">Cristine Manneh</span>
<span id="t84" class="t" style="left:1063.00px;top:1216.25px;font-size:24px;line-height:31px;color:#71717b;letter-spacing:0.019px;">aishalagie@gmail.com</span>
<div class="pill" style="left:1525px;top:1192px"></div>
<span id="t85" class="t" style="left:1541.74px;top:1196.25px;font-size:24px;line-height:31px;color:#85858f;">—</span>
<div class="pill" style="left:1825px;top:1192px"></div>
<span id="t86" class="t" style="left:1841.74px;top:1196.25px;font-size:24px;line-height:31px;color:#85858f;">—</span>
<span id="t87" class="t" style="left:2071.74px;top:1193.75px;font-size:28px;line-height:36px;color:#85858f;">—</span>
<span id="t88" class="t" style="left:2363.63px;top:1193.75px;font-size:28px;line-height:36px;color:#85858f;">—</span>
<div class="badge" style="left:2713px;top:1182px"></div>
<svg class="ic" style="left:2739px;top:1196px;width:32px;height:32px;color:#10b981;" viewBox="0 0 24 24" stroke-width="2"><circle cx="12" cy="12" r="10"/><path d="m9 12 2 2 4-4"/></svg>
<span id="t89" class="t" style="left:2788.80px;top:1193.75px;font-size:28px;line-height:36px;color:#10b981;letter-spacing:0.450px;">Active</span>
<div class="hl" style="left:596px;top:1264px;width:2344px"></div>
<div class="cb" style="left:616px;top:1302px"></div>
<span id="t90" class="t" style="left:666.78px;top:1298.75px;font-size:28.5px;line-height:37px;color:#00c950;letter-spacing:0.780px;">SU21157</span>
<div class="av" style="left:975px;top:1286px"></div>
<span id="t91" class="t" style="left:989.00px;top:1301.75px;font-size:24.5px;line-height:32px;color:#0a0a0a;">EM</span>
<span id="t92" class="t" style="left:1063.00px;top:1283.75px;font-size:28px;line-height:36px;color:#0a0a0a;letter-spacing:-0.219px;-webkit-text-stroke:0.2px #0a0a0a;">Ebrima M. Saidy</span>
<span id="t93" class="t" style="left:1063.00px;top:1322.25px;font-size:24px;line-height:31px;color:#71717b;letter-spacing:0.180px;">ebrimasaidy271@gmail.com</span>
<div class="pill" style="left:1525px;top:1298px"></div>
<span id="t94" class="t" style="left:1541.74px;top:1302.25px;font-size:24px;line-height:31px;color:#85858f;">—</span>
<div class="pill" style="left:1825px;top:1298px"></div>
<span id="t95" class="t" style="left:1841.74px;top:1302.25px;font-size:24px;line-height:31px;color:#85858f;">—</span>
<span id="t96" class="t" style="left:2071.74px;top:1299.75px;font-size:28px;line-height:36px;color:#85858f;">—</span>
<span id="t97" class="t" style="left:2363.63px;top:1299.75px;font-size:28px;line-height:36px;color:#85858f;">—</span>
<div class="badge" style="left:2713px;top:1288px"></div>
<svg class="ic" style="left:2739px;top:1302px;width:32px;height:32px;color:#10b981;" viewBox="0 0 24 24" stroke-width="2"><circle cx="12" cy="12" r="10"/><path d="m9 12 2 2 4-4"/></svg>
<span id="t98" class="t" style="left:2788.80px;top:1299.75px;font-size:28px;line-height:36px;color:#10b981;letter-spacing:0.450px;">Active</span>
<div class="hl" style="left:596px;top:1370px;width:2344px"></div>
<div class="cb" style="left:616px;top:1408px"></div>
<span id="t99" class="t" style="left:666.78px;top:1404.75px;font-size:28.5px;line-height:37px;color:#00c950;letter-spacing:0.480px;">SU68319</span>
<div class="av" style="left:975px;top:1392px"></div>
<span id="t100" class="t" style="left:993.50px;top:1407.75px;font-size:24.5px;line-height:32px;color:#0a0a0a;">AJ</span>
<span id="t101" class="t" style="left:1063.00px;top:1389.75px;font-size:28px;line-height:36px;color:#0a0a0a;letter-spacing:0.173px;-webkit-text-stroke:0.2px #0a0a0a;">Amadou Jallow</span>
<span id="t102" class="t" style="left:1063.00px;top:1428.25px;font-size:24px;line-height:31px;color:#71717b;letter-spacing:-0.064px;">abaldeh@ueg.edu.gm</span>
<div class="pill" style="left:1525px;top:1404px"></div>
<span id="t103" class="t" style="left:1541.74px;top:1408.25px;font-size:24px;line-height:31px;color:#85858f;">—</span>
<div class="pill" style="left:1825px;top:1404px"></div>
<span id="t104" class="t" style="left:1841.74px;top:1408.25px;font-size:24px;line-height:31px;color:#85858f;">—</span>
<span id="t105" class="t" style="left:2071.74px;top:1405.75px;font-size:28px;line-height:36px;color:#85858f;">—</span>
<span id="t106" class="t" style="left:2363.63px;top:1405.75px;font-size:28px;line-height:36px;color:#85858f;">—</span>
<div class="badge" style="left:2713px;top:1394px"></div>
<svg class="ic" style="left:2739px;top:1408px;width:32px;height:32px;color:#10b981;" viewBox="0 0 24 24" stroke-width="2"><circle cx="12" cy="12" r="10"/><path d="m9 12 2 2 4-4"/></svg>
<span id="t107" class="t" style="left:2788.80px;top:1405.75px;font-size:28px;line-height:36px;color:#10b981;letter-spacing:0.450px;">Active</span>
<div class="hl" style="left:596px;top:1476px;width:2344px"></div>
<div class="cb" style="left:616px;top:1514px"></div>
<span id="t108" class="t" style="left:666.78px;top:1510.75px;font-size:28.5px;line-height:37px;color:#00c950;letter-spacing:0.480px;">SU54913</span>
<div class="av" style="left:975px;top:1498px"></div>
<span id="t109" class="t" style="left:991.25px;top:1513.75px;font-size:24.5px;line-height:32px;color:#0a0a0a;">FB</span>
<span id="t110" class="t" style="left:1063.00px;top:1495.75px;font-size:28px;line-height:36px;color:#0a0a0a;letter-spacing:0.291px;-webkit-text-stroke:0.2px #0a0a0a;">Fatoumatta Binta Barry</span>
<span id="t111" class="t" style="left:1063.00px;top:1534.25px;font-size:24px;line-height:31px;color:#71717b;letter-spacing:0.360px;">fatoumatabarry7865@gmail.com</span>
<div class="pill" style="left:1525px;top:1510px"></div>
<span id="t112" class="t" style="left:1541.74px;top:1514.25px;font-size:24px;line-height:31px;color:#85858f;">—</span>
<div class="pill" style="left:1825px;top:1510px"></div>
<span id="t113" class="t" style="left:1841.74px;top:1514.25px;font-size:24px;line-height:31px;color:#85858f;">—</span>
<span id="t114" class="t" style="left:2071.74px;top:1511.75px;font-size:28px;line-height:36px;color:#85858f;">—</span>
<span id="t115" class="t" style="left:2363.63px;top:1511.75px;font-size:28px;line-height:36px;color:#85858f;">—</span>
<div class="badge" style="left:2713px;top:1500px"></div>
<svg class="ic" style="left:2739px;top:1514px;width:32px;height:32px;color:#10b981;" viewBox="0 0 24 24" stroke-width="2"><circle cx="12" cy="12" r="10"/><path d="m9 12 2 2 4-4"/></svg>
<span id="t116" class="t" style="left:2788.80px;top:1511.75px;font-size:28px;line-height:36px;color:#10b981;letter-spacing:0.450px;">Active</span>
<div class="hl" style="left:596px;top:1582px;width:2344px"></div>
<div class="cb" style="left:616px;top:1620px"></div>
<span id="t117" class="t" style="left:666.78px;top:1616.75px;font-size:28.5px;line-height:37px;color:#00c950;letter-spacing:0.480px;">SU77856</span>
<div class="av" style="left:975px;top:1604px"></div>
<span id="t118" class="t" style="left:990.80px;top:1619.75px;font-size:24.5px;line-height:32px;color:#0a0a0a;">FK</span>
<span id="t119" class="t" style="left:1063.00px;top:1601.75px;font-size:28px;line-height:36px;color:#0a0a0a;letter-spacing:-0.016px;-webkit-text-stroke:0.2px #0a0a0a;">Fatoumatta K Sonko</span>
<span id="t120" class="t" style="left:1063.00px;top:1640.25px;font-size:24px;line-height:31px;color:#71717b;letter-spacing:0.239px;">sonkofatoumatta96@gmail.com</span>
<div class="pill" style="left:1525px;top:1616px"></div>
<span id="t121" class="t" style="left:1541.74px;top:1620.25px;font-size:24px;line-height:31px;color:#85858f;">—</span>
<div class="pill" style="left:1825px;top:1616px"></div>
<span id="t122" class="t" style="left:1841.74px;top:1620.25px;font-size:24px;line-height:31px;color:#85858f;">—</span>
<span id="t123" class="t" style="left:2071.74px;top:1617.75px;font-size:28px;line-height:36px;color:#85858f;">—</span>
<span id="t124" class="t" style="left:2363.63px;top:1617.75px;font-size:28px;line-height:36px;color:#85858f;">—</span>
<div class="badge" style="left:2713px;top:1606px"></div>
<svg class="ic" style="left:2739px;top:1620px;width:32px;height:32px;color:#10b981;" viewBox="0 0 24 24" stroke-width="2"><circle cx="12" cy="12" r="10"/><path d="m9 12 2 2 4-4"/></svg>
<span id="t125" class="t" style="left:2788.80px;top:1617.75px;font-size:28px;line-height:36px;color:#10b981;letter-spacing:0.450px;">Active</span>
</div>
<script>(function(){var w=window.innerWidth;if(w&&w!==3024){document.getElementById("root").style.transform="scale("+(w/3024)+")";}})();</script>
</body></html>
